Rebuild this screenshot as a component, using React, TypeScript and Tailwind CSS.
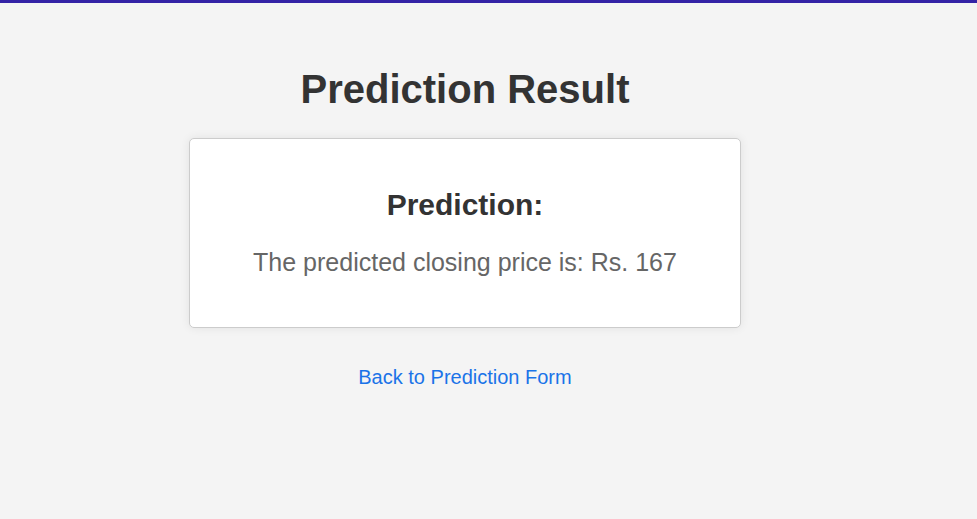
export default function App() {
  return (
    <div className="min-h-[519px] bg-[#f4f4f4] border-t-[3px] border-[#3423a6] font-['Liberation_Sans',Arial,sans-serif]">
      <div className="w-[930px] flex flex-col items-center pt-[63px]">
        <h1 className="text-[40px] leading-[46px] font-bold text-[#333]">Prediction Result</h1>
        <div className="mt-[26px] w-[552px] h-[190px] bg-white border border-[#ccc] rounded-[5px] shadow-[0_0_10px_rgba(0,0,0,0.08)] flex flex-col items-center pt-[49px]">
          <h2 className="text-[30px] leading-[34px] font-bold text-[#333]">Prediction:</h2>
          <p className="mt-[26px] text-[25px] leading-[29px] text-[#666]">
            The predicted closing price is: Rs. 167
          </p>
        </div>
        <a href="#" className="mt-[37px] text-[20px] leading-[24px] text-[#1a73e8]">
          Back to Prediction Form
        </a>
      </div>
    </div>
  );
}
